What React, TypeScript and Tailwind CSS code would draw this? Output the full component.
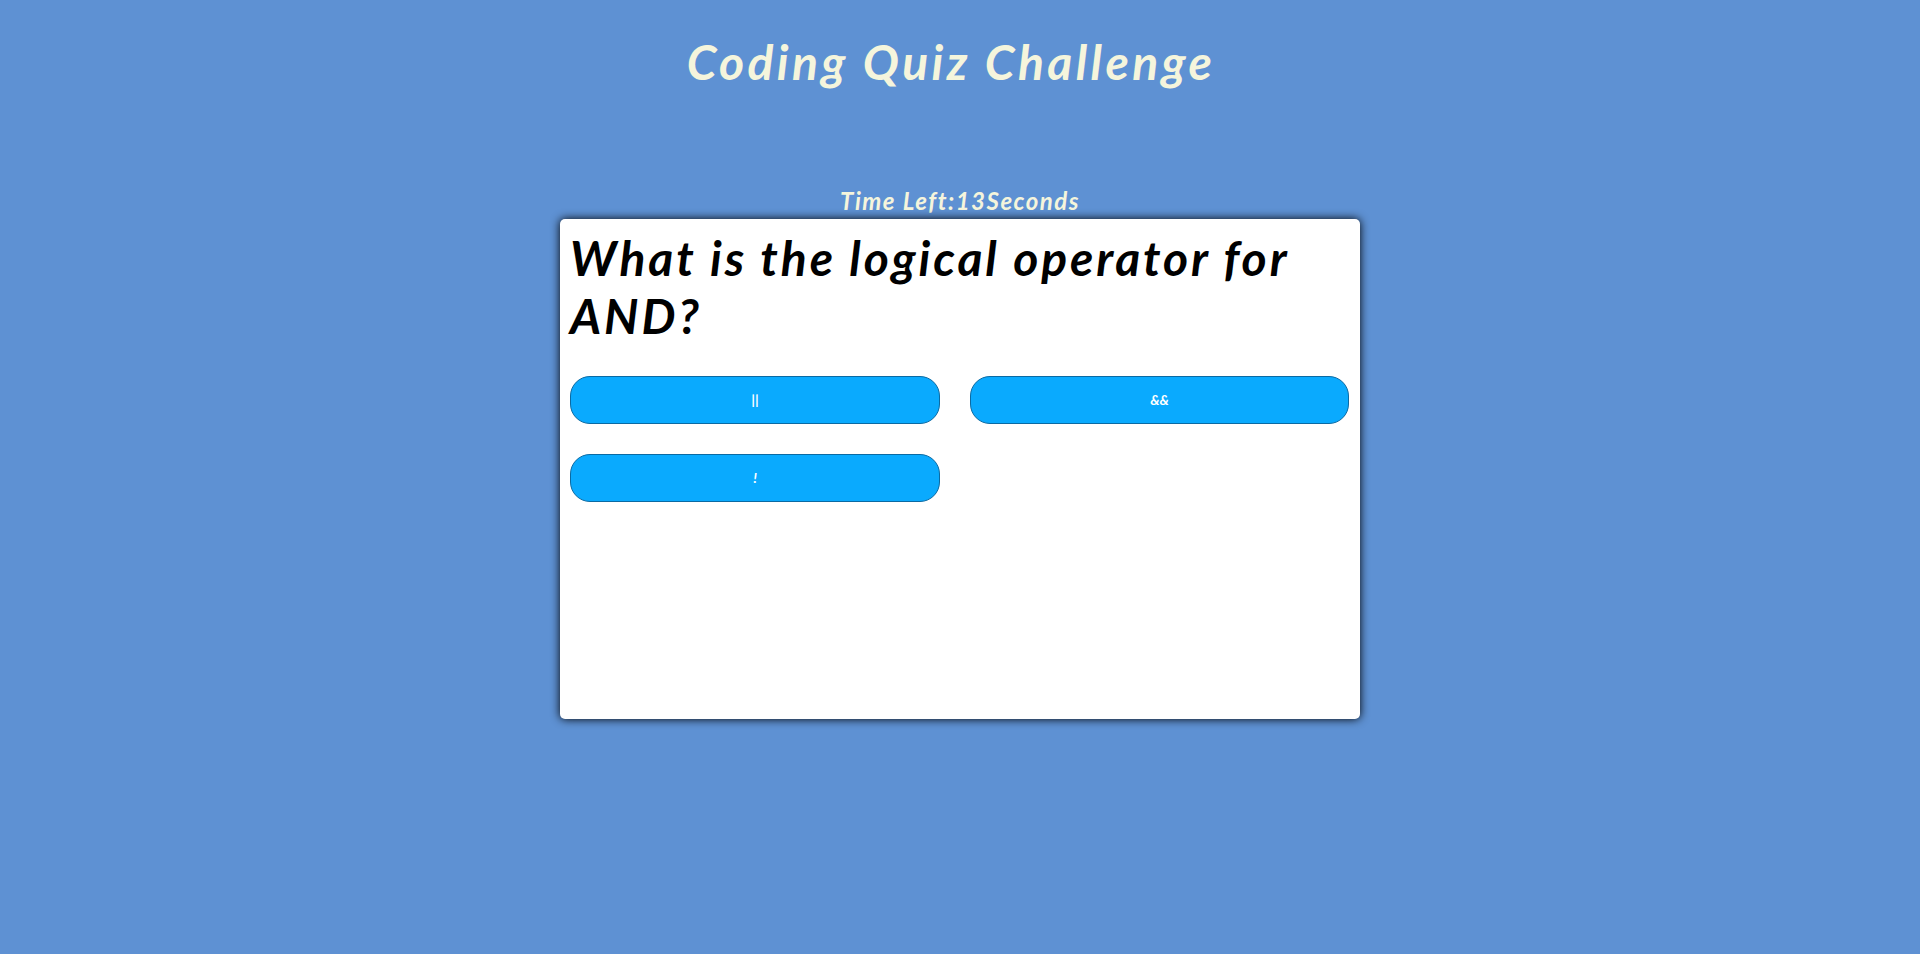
import React from "react";

const choices = [
  { label: "||", width: "w-[370px]" },
  { label: "&&", width: "w-[379px]" },
  { label: "!", width: "w-[370px]" },
];

export default function App() {
  return (
    <div
      className="min-h-[954px] w-full bg-[#5e91d3] flex flex-col items-center"
      style={{ fontFamily: "Lato, 'Open Sans', sans-serif" }}
    >
      <h1 className="mt-[33px] pr-[18px] text-[48px] leading-[1.2] font-bold italic text-[#f5f5dc] tracking-[3.4px]">
        Coding Quiz Challenge
      </h1>

      <div className="mt-[96px] text-[24px] leading-[1.2] font-bold italic text-[#f5f5dc] tracking-[1.5px]">
        Time Left:13Seconds
      </div>

      <div className="mt-[4px] w-[800px] h-[500px] bg-white rounded-[5px] shadow-[0_0_10px_#000] p-[10px]">
        <h2 className="text-[48px] leading-[1.2] font-bold italic text-black m-0 tracking-[2.9px]">
          What is the logical operator for AND?
        </h2>

        <div className="mt-[31px] flex flex-wrap gap-x-[30px] gap-y-[30px]">
          {choices.map((c) => (
            <button
              key={c.label}
              className={`${c.width} h-[48px] rounded-[20px] bg-[#0aaafe] border border-[#0b6aa3] text-white text-[14px] font-bold italic`}
            >
              {c.label}
            </button>
          ))}
        </div>
      </div>
    </div>
  );
}
